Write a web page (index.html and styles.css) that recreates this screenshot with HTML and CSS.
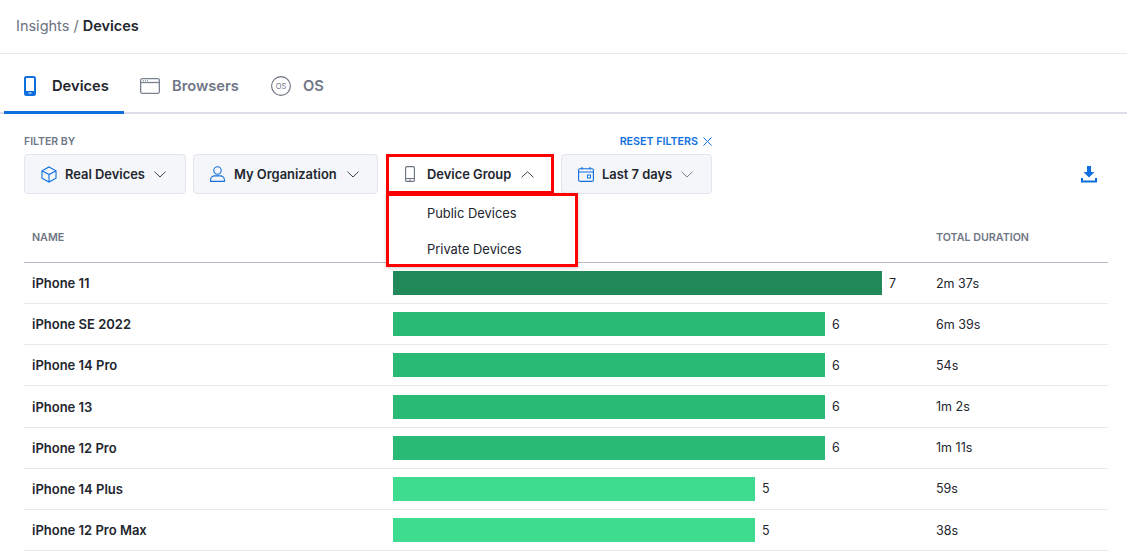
FILE: index.html
```html
<!DOCTYPE html>
<html lang="en">
<head>
<meta charset="UTF-8">
<meta name="viewport" content="width=device-width, initial-scale=1.0">
<link rel="stylesheet" href="styles.css">
<title>Insights - Devices</title>
</head>
<body>
<div class="crumbs"><span class="crumb-parent">Insights /</span> <b>Devices</b></div>

<div class="tabs">
  <div class="tab active">
    <svg width="12" height="20" viewBox="0 0 12 20"><rect x="1" y="1" width="10" height="18" rx="1.500" fill="none" stroke="#0f6fde" stroke-width="2"/><rect x="1" y="15" width="10" height="4" fill="#0f6fde"/><rect x="4.500" y="16.500" width="3" height="1" fill="#fff"/></svg>
    <span>Devices</span>
  </div>
  <div class="tab tab-browsers">
    <svg width="20" height="16" viewBox="0 0 20 16"><rect x="0.650" y="0.650" width="18.700" height="14.700" rx="1.500" fill="none" stroke="#7a8291" stroke-width="1.300"/><path d="M1 4.500h18" stroke="#7a8291" stroke-width="1.300"/><path d="M3 2.700h5" stroke="#7a8291" stroke-width="1" stroke-dasharray="1 1"/></svg>
    <span>Browsers</span>
  </div>
  <div class="tab tab-os">
    <svg width="20" height="20" viewBox="0 0 20 20"><circle cx="10" cy="10" r="9.400" fill="none" stroke="#6b7280" stroke-width="1.100"/><text x="10" y="12.700" text-anchor="middle" class="os-text">OS</text></svg>
    <span>OS</span>
  </div>
</div>

<div class="filters">
  <div class="filter-labels">
    <span class="filter-by">FILTER BY</span>
    <span class="reset">RESET FILTERS
      <svg width="9" height="9" viewBox="0 0 10 10"><path d="M.5.5l9 9M9.500.5l-9 9" stroke="#0f6fde" stroke-width="1.100" fill="none"/></svg>
    </span>
  </div>
  <div class="filter-row">
    <div class="select select-real">
      <svg width="16" height="17" viewBox="0 0 16 17"><path d="M8 1l7 3.800v7.400L8 16l-7-3.800V4.800zM1 4.800l7 3.800 7-3.800M8 8.600V16" fill="none" stroke="#0f6fde" stroke-width="1.100"/></svg>
      <span>Real Devices</span>
      <svg class="chev" width="12" height="7" viewBox="0 0 12 7"><path d="M.5.700L6 6l5.500-5.300" fill="none" stroke="#3a4150" stroke-width="1"/></svg>
    </div>
    <div class="select select-org">
      <svg width="15" height="16" viewBox="0 0 15 16"><circle cx="7.500" cy="4.500" r="3.700" fill="none" stroke="#0f6fde" stroke-width="1.100"/><path d="M.600 15.400v-1.500c0-2.500 2-4 4-4h5.800c2 0 4 1.500 4 4v1.500z" fill="none" stroke="#0f6fde" stroke-width="1.100"/></svg>
      <span>My Organization</span>
      <svg class="chev" width="12" height="7" viewBox="0 0 12 7"><path d="M.5.700L6 6l5.500-5.300" fill="none" stroke="#3a4150" stroke-width="1"/></svg>
    </div>
    <div class="select select-group">
      <svg width="10" height="16" viewBox="0 0 10 16"><rect x="0.600" y="0.600" width="8.800" height="14.800" rx="1.200" fill="none" stroke="#6b7280" stroke-width="1.100"/><path d="M1 12.500h8M4.200 14h1.600" stroke="#6b7280" stroke-width="1"/></svg>
      <span>Device Group</span>
      <svg class="chev" width="13" height="7" viewBox="0 0 13 7"><path d="M.5 6.300L6.500.8l6 5.500" fill="none" stroke="#3a4150" stroke-width="1"/></svg>
      <div class="menu">
        <div class="menu-item">Public Devices</div>
        <div class="menu-item">Private Devices</div>
      </div>
    </div>
    <div class="select select-date">
      <svg width="16" height="15" viewBox="0 0 16 15"><rect x="0.600" y="1.800" width="14.800" height="12.600" rx="1.500" fill="none" stroke="#0f6fde" stroke-width="1.100"/><path d="M.6 5h14.800M4 0v2.500M12 0v2.500" stroke="#0f6fde" stroke-width="1.100"/><rect x="9.500" y="8" width="3" height="3" fill="none" stroke="#0f6fde"/></svg>
      <span>Last 7 days</span>
      <svg class="chev" width="12" height="7" viewBox="0 0 12 7"><path d="M.5.700L6 6l5.500-5.300" fill="none" stroke="#7a8291" stroke-width="1"/></svg>
    </div>
    <svg class="download" width="16" height="17" viewBox="0 0 16 17"><path d="M6 0h4v6h3.500L8 11.500 2.500 6H6z" fill="#0f6fde"/><path d="M1 12v3.500h14V12" fill="none" stroke="#0f6fde" stroke-width="2"/></svg>
  </div>
</div>

<div class="table">
  <div class="head">
    <div>NAME</div>
    <div></div>
    <div>TOTAL DURATION</div>
  </div>
  <div class="row">
    <div class="name">iPhone 11</div>
    <div class="bar-cell"><div class="bar dark" style="width:489px"></div><span>7</span></div>
    <div class="time">2m 37s</div>
  </div>
  <div class="row">
    <div class="name">iPhone SE 2022</div>
    <div class="bar-cell"><div class="bar mid" style="width:432px"></div><span>6</span></div>
    <div class="time">6m 39s</div>
  </div>
  <div class="row">
    <div class="name">iPhone 14 Pro</div>
    <div class="bar-cell"><div class="bar mid" style="width:432px"></div><span>6</span></div>
    <div class="time">54s</div>
  </div>
  <div class="row">
    <div class="name">iPhone 13</div>
    <div class="bar-cell"><div class="bar mid" style="width:432px"></div><span>6</span></div>
    <div class="time">1m 2s</div>
  </div>
  <div class="row">
    <div class="name">iPhone 12 Pro</div>
    <div class="bar-cell"><div class="bar mid" style="width:432px"></div><span>6</span></div>
    <div class="time">1m 11s</div>
  </div>
  <div class="row">
    <div class="name">iPhone 14 Plus</div>
    <div class="bar-cell"><div class="bar light" style="width:362px"></div><span>5</span></div>
    <div class="time">59s</div>
  </div>
  <div class="row">
    <div class="name">iPhone 12 Pro Max</div>
    <div class="bar-cell"><div class="bar light" style="width:362px"></div><span>5</span></div>
    <div class="time">38s</div>
  </div>
</div>
</body>
</html>
```
FILE: styles.css
```css
body {
  margin: 0;
  height: 551px;
  overflow: hidden;
  background: #fff;
  color: #22262e;
  font-family: Inter, "Liberation Sans", sans-serif;
}

.crumbs {
  height: 53px;
  padding-left: 16px;
  line-height: 52px;
  font-size: 14.5px;
  border-bottom: 1px solid #e8eaf0;
}

.crumbs b {
  font-weight: 600;
}

.crumb-parent {
  color: #6b7280;
}

.tabs {
  display: flex;
  height: 58px;
  padding-left: 4px;
  border-bottom: 2px solid #dcdfe9;
}

.tab {
  display: flex;
  align-items: center;
  height: 60px;
  padding-top: 4px;
  box-sizing: border-box;
  font-size: 14.700px;
  font-weight: 600;
  color: #6f7685;
}

.tab svg {
  flex-shrink: 0;
}

.tab.active {
  width: 120px;
  gap: 16px;
  padding-left: 20px;
  padding-top: 7px;
  color: #22262e;
  border-bottom: 3px solid #0f6fde;
}

.tab-browsers {
  padding-left: 16px;
  gap: 12px;
}

.tab-os {
  padding-left: 32px;
  gap: 12px;
}

.os-text {
  font-size: 7.500px;
  font-weight: 400;
  fill: #6b7280;
}

.filters {
  padding: 21px 19px 0 24px;
}

.filter-labels {
  display: flex;
  align-items: center;
  width: 688px;
  height: 12px;
  justify-content: space-between;
  font-size: 10.500px;
  font-weight: 600;
}

.filter-by {
  color: #6f7685;
}

.reset {
  display: flex;
  align-items: center;
  gap: 5px;
  font-size: 10.700px;
  color: #0f6fde;
}

.filter-row {
  display: flex;
  align-items: center;
  gap: 7px;
  margin-top: 7px;
}

.select {
  display: flex;
  align-items: center;
  box-sizing: border-box;
  height: 40px;
  position: relative;
  gap: 8px;
  padding-left: 16px;
  background: #f5f6f9;
  border: 1px solid #e2e5ee;
  border-radius: 4px;
  font-size: 12.900px;
  font-weight: 600;
}

.select-real { width: 162px; }

.select-org {
  width: 185px;
  gap: 9px;
}

.select-group {
  width: 168px;
  margin-left: 1px;
  padding-left: 16px;
  gap: 12px;
  background: #fff;
  border: 3px solid #f00;
  border-radius: 0;
}

.select-date { width: 151px; }

.chev {
  margin-left: 1px;
}

.select-group .chev {
  margin-left: -2px;
}

.download {
  margin-left: auto;
  margin-right: 11px;
}

.menu {
  position: absolute;
  left: -3px;
  top: 36px;
  width: 192px;
  height: 74px;
  box-sizing: border-box;
  padding-top: 2px;
  background: #fff;
  border: 3px solid #f00;
  box-shadow: 0 1px 4px rgba(0, 0, 0, 0.2);
  font-weight: 400;
  z-index: 2;
}

.menu-item {
  height: 33px;
  padding: 6px 0 0 38px;
  box-sizing: border-box;
  margin-bottom: 3px;
  line-height: 20px;
}

.table {
  margin: 0 19px 0 24px;
}

.head,
.row {
  display: grid;
  grid-template-columns: 369px 543px 1fr;
}

.head {
  height: 69px;
  padding-top: 37px;
  box-sizing: border-box;
  border-bottom: 1px solid #b5bcc8;
  font-size: 10.700px;
  font-weight: 600;
  line-height: 14px;
  color: #6f7685;
}

.head div:first-child,
.name {
  padding-left: 8px;
}

.row {
  height: 41.170px;
  box-sizing: border-box;
  align-items: center;
  border-bottom: 1px solid #e8eaf0;
  font-size: 12.500px;
}

.name {
  font-size: 13px;
  font-weight: 600;
}

.bar-cell {
  display: flex;
  align-items: center;
  gap: 7px;
}

.bar {
  height: 24px;
}

.bar.dark { background: #228a5a; }

.bar.mid { background: #29bb75; }

.bar.light { background: #3edc8e; }
```
